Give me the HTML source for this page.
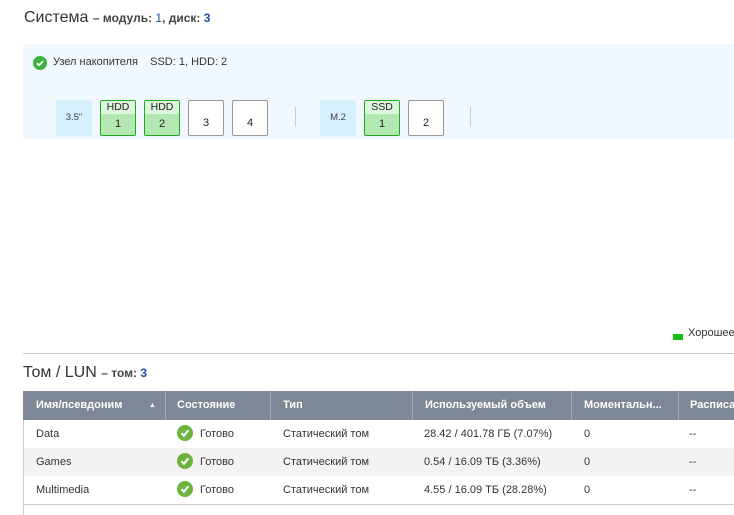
<!DOCTYPE html>
<html><head><meta charset="utf-8"><style>
*{margin:0;padding:0;box-sizing:border-box}
body{width:734px;height:515px;overflow:hidden;background:#fff;font-family:"Liberation Sans",sans-serif;color:#333;position:relative}
.a{position:absolute;white-space:nowrap}
.b{color:#1d4f9c}
.panel{position:absolute;left:23px;top:44px;width:711px;height:95px;background:#f1f9fe}
.d{position:absolute;top:100px;width:36px;height:36px;border:1px solid #999;border-radius:2px;background:#fff;font-size:11px;text-align:center;color:#222}
.d.g{border-color:#21a821;background:#b3e8b3}
.d.g .t{background:#dcf5dc;height:13px;line-height:13px;font-size:10.5px}
.d.g .n{line-height:20px}
.d.w .n{line-height:44px}
.d.l{background:#d6effd;border:none;color:#444;line-height:36px;font-size:9.5px}
.sep{position:absolute;top:107px;width:1px;height:20px;background:#ccc}
.th{position:absolute;top:391px;height:29px;background:#7e8796;color:#fff;font-size:11px;font-weight:bold;line-height:29px;border-right:1px solid #a2a9b4}
.td{position:absolute;font-size:11px;line-height:28px;color:#333}
.ck{display:inline-block;width:16px;height:16px;border-radius:50%;background:#6cb33f;vertical-align:middle;position:relative;margin-right:7px;top:-1px}
</style></head><body>
<div class="a" style="left:24px;top:9px;font-size:16px;color:#333">Система <span style="font-size:12px;font-weight:bold;color:#444">– модуль: <span class="b" style="font-weight:normal">1</span>, диск: <span class="b">3</span></span></div>
<div class="panel"></div>
<div class="a" style="left:33px;top:56px;width:14px;height:14px;border-radius:50%;background:#3cb33c"><svg width="14" height="14" viewBox="0 0 14 14"><path d="M4 7.2l2 2 4-4" stroke="#fff" stroke-width="1.8" fill="none"/></svg></div>
<div class="a" style="left:53px;top:56px;font-size:11px;color:#333">Узел накопителя&nbsp;&nbsp;&nbsp;&nbsp;SSD: 1, HDD: 2</div>
<div class="d l" style="left:56px">3.5"</div>
<div class="d g" style="left:100px"><div class="t">HDD</div><div class="n">1</div></div>
<div class="d g" style="left:144px"><div class="t">HDD</div><div class="n">2</div></div>
<div class="d w" style="left:188px"><div class="n">3</div></div>
<div class="d w" style="left:232px"><div class="n">4</div></div>
<div class="sep" style="left:295px"></div>
<div class="d l" style="left:320px">M.2</div>
<div class="d g" style="left:364px"><div class="t">SSD</div><div class="n">1</div></div>
<div class="d w" style="left:408px"><div class="n">2</div></div>
<div class="sep" style="left:470px"></div>
<div class="a" style="left:673px;top:334px;width:10px;height:6px;background:#13c013"></div>
<div class="a" style="left:688px;top:327px;font-size:11px;color:#333">Хорошее</div>
<div class="a" style="left:23px;top:353px;width:711px;height:1px;background:#ccc"></div>
<div class="a" style="left:23px;top:364px;font-size:16px;color:#333">Том / LUN <span style="font-size:12px;font-weight:bold;color:#444">– том: <span class="b">3</span></span></div>
<div class="th" style="left:23px;width:143px;padding-left:13px">Имя/псевдоним<span style="position:absolute;left:126px;font-size:7px">▲</span></div>
<div class="th" style="left:166px;width:105px;padding-left:11px">Состояние</div>
<div class="th" style="left:271px;width:142px;padding-left:12px">Тип</div>
<div class="th" style="left:413px;width:159px;padding-left:12px">Используемый объем</div>
<div class="th" style="left:572px;width:107px;padding-left:12px">Моментальн...</div>
<div class="th" style="left:679px;width:60px;padding-left:11px;border:none">Расписание</div>
<div class="a" style="left:23px;top:448px;width:711px;height:28px;background:#f3f3f3"></div>
<div class="a" style="left:23px;top:420px;width:1px;height:95px;background:#ccc"></div>
<div class="a" style="left:23px;top:504px;width:711px;height:1px;background:#ccc"></div>
<div class="td" style="left:36px;top:420px">Data</div>
<div class="td" style="left:36px;top:448px">Games</div>
<div class="td" style="left:36px;top:476px">Multimedia</div>
<div class="td" style="left:177px;top:420px"><span class="ck"><svg width="16" height="16" viewBox="0 0 16 16" style="position:absolute;left:0;top:0"><path d="M4.5 8.2l2.4 2.6 4.5-5.5" stroke="#fff" stroke-width="2" fill="none"/></svg></span>Готово</div>
<div class="td" style="left:177px;top:448px"><span class="ck"><svg width="16" height="16" viewBox="0 0 16 16" style="position:absolute;left:0;top:0"><path d="M4.5 8.2l2.4 2.6 4.5-5.5" stroke="#fff" stroke-width="2" fill="none"/></svg></span>Готово</div>
<div class="td" style="left:177px;top:476px"><span class="ck"><svg width="16" height="16" viewBox="0 0 16 16" style="position:absolute;left:0;top:0"><path d="M4.5 8.2l2.4 2.6 4.5-5.5" stroke="#fff" stroke-width="2" fill="none"/></svg></span>Готово</div>
<div class="td" style="left:283px;top:420px">Статический том</div>
<div class="td" style="left:283px;top:448px">Статический том</div>
<div class="td" style="left:283px;top:476px">Статический том</div>
<div class="td" style="left:424px;top:420px">28.42 / 401.78 ГБ (7.07%)</div>
<div class="td" style="left:424px;top:448px">0.54 / 16.09 ТБ (3.36%)</div>
<div class="td" style="left:424px;top:476px">4.55 / 16.09 ТБ (28.28%)</div>
<div class="td" style="left:584px;top:420px">0</div>
<div class="td" style="left:584px;top:448px">0</div>
<div class="td" style="left:584px;top:476px">0</div>
<div class="td" style="left:689px;top:420px">--</div>
<div class="td" style="left:689px;top:448px">--</div>
<div class="td" style="left:689px;top:476px">--</div>
</body></html>
